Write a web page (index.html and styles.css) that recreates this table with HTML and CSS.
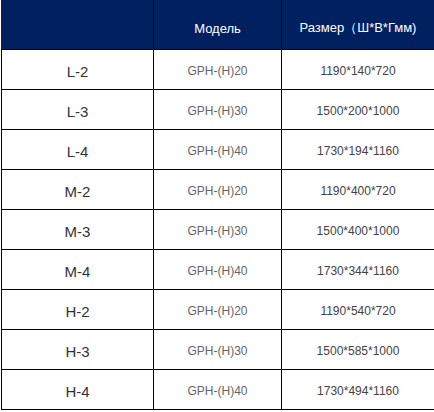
FILE: index.html
```html
<!DOCTYPE html>
<html lang="ru">
<head>
<meta charset="utf-8">
<link rel="stylesheet" href="styles.css">
</head>
<body>
<table class="spec">
  <colgroup>
    <col class="c1"><col class="c2"><col class="c3">
  </colgroup>
  <thead>
    <tr>
      <th></th>
      <th>Модель</th>
      <th>Размер（Ш*В*Гмм)</th>
    </tr>
  </thead>
  <tbody>
    <tr><td class="size">L-2</td><td class="model">GPH-(H)20</td><td class="dim">1190*140*720</td></tr>
    <tr><td class="size">L-3</td><td class="model">GPH-(H)30</td><td class="dim">1500*200*1000</td></tr>
    <tr><td class="size">L-4</td><td class="model">GPH-(H)40</td><td class="dim">1730*194*1160</td></tr>
    <tr><td class="size">M-2</td><td class="model">GPH-(H)20</td><td class="dim">1190*400*720</td></tr>
    <tr><td class="size">M-3</td><td class="model">GPH-(H)30</td><td class="dim">1500*400*1000</td></tr>
    <tr><td class="size">M-4</td><td class="model">GPH-(H)40</td><td class="dim">1730*344*1160</td></tr>
    <tr><td class="size">H-2</td><td class="model">GPH-(H)20</td><td class="dim">1190*540*720</td></tr>
    <tr><td class="size">H-3</td><td class="model">GPH-(H)30</td><td class="dim">1500*585*1000</td></tr>
    <tr><td class="size">H-4</td><td class="model">GPH-(H)40</td><td class="dim">1730*494*1160</td></tr>
  </tbody>
</table>
</body>
</html>
```

FILE: styles.css
```css
html, body {
  margin: 0;
  padding: 0;
  background: #fff;
}
.spec {
  border-collapse: collapse;
  table-layout: fixed;
  width: 433px;
  margin-left: 1px;
  font-family: "Liberation Sans", Arial, sans-serif;
}
.c1 { width: 152px; }
.c2 { width: 128px; }
.c3 { width: 153px; }
.spec th {
  background: #002060;
  color: #fff;
  font-weight: normal;
  font-size: 13px;
  height: 49px;
  padding: 8px 0 0 0;
  box-sizing: border-box;
  text-align: center;
  vertical-align: middle;
  border-left: 1px solid #000;
  border-right: 1px solid #000;
  border-bottom: 1px solid #000;
  border-top: none;
}
.spec th:first-child {
  border-left-color: #002060;
}
.spec td {
  height: 40px;
  padding: 4px 0 0 0;
  box-sizing: border-box;
  border: 1px solid #000;
  text-align: center;
  vertical-align: middle;
}
.size {
  font-size: 15px;
  color: #333;
}
.model {
  font-size: 12px;
  color: #666;
}
.dim {
  font-size: 12px;
  color: #444;
}
```
